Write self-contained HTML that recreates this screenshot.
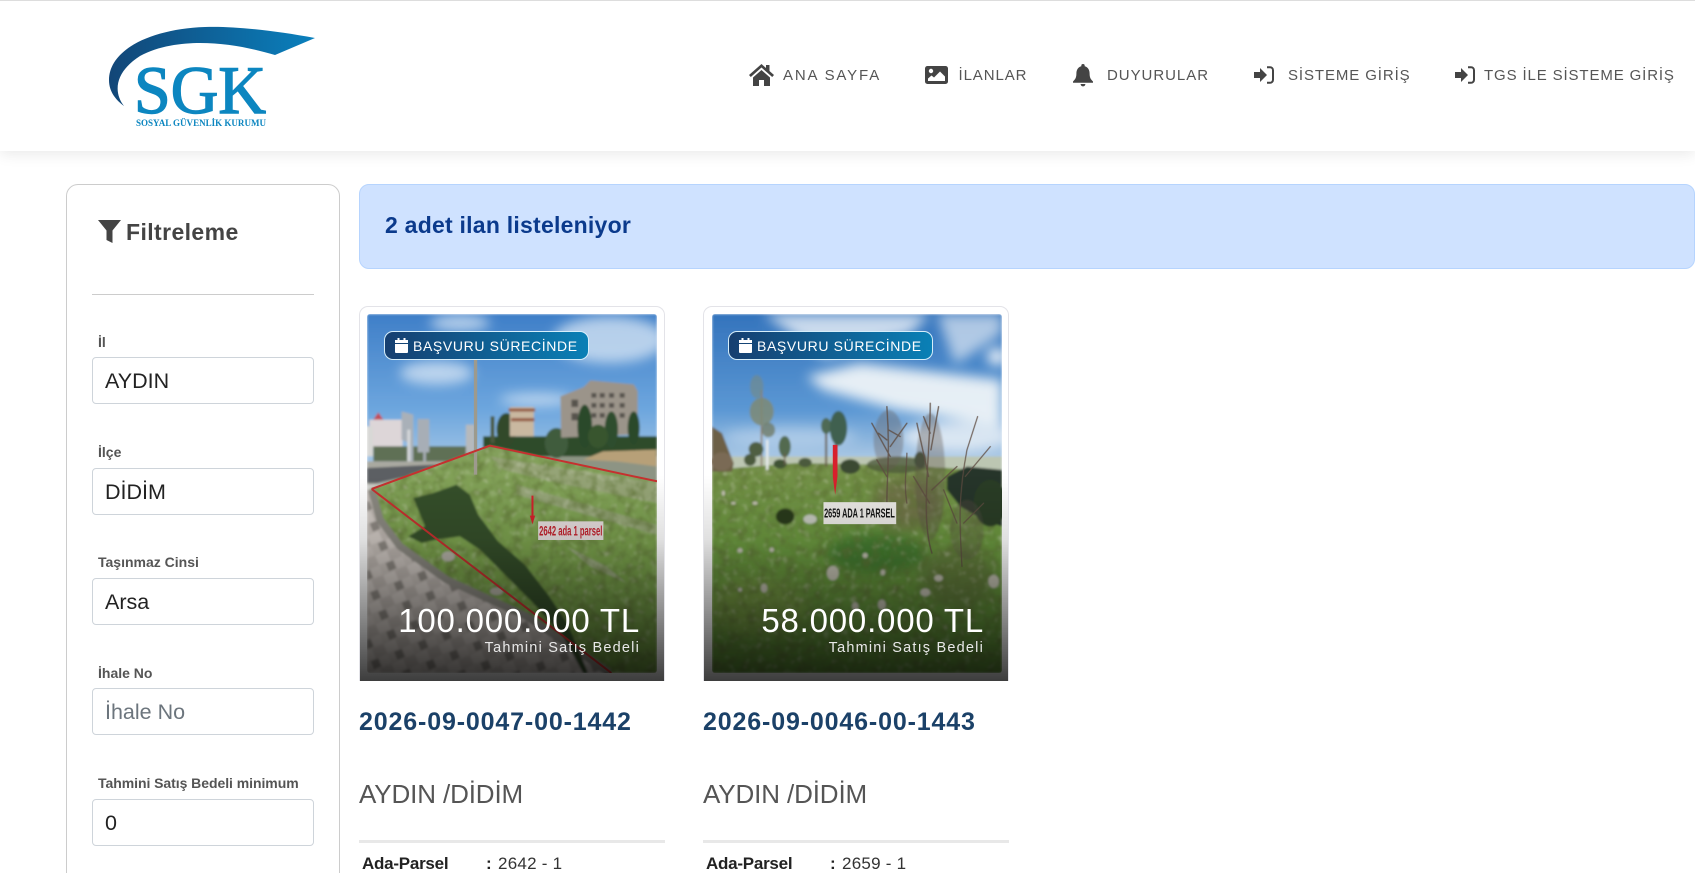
<!DOCTYPE html>
<html lang="tr">
<head>
<meta charset="utf-8">
<title>SGK İlanlar</title>
<style>
*{box-sizing:border-box}
html,body{margin:0;padding:0;width:1695px;height:873px;overflow:hidden;background:#fff;font-family:"Liberation Sans",sans-serif;color:#444}
#root{position:absolute;left:0;top:0;width:1695px;height:873px;overflow:hidden;background:#fff}
.abs{position:absolute;white-space:nowrap;line-height:1}
header{position:absolute;left:0;top:0;width:1695px;height:151px;background:#fff;border-top:1px solid #ddd;box-shadow:0 3px 14px rgba(0,0,0,.09)}
nav span{position:absolute;white-space:nowrap;font-size:15px;line-height:1;top:67px;color:#555}
nav svg{position:absolute;fill:#444}
aside{position:absolute;left:66px;top:184px;width:274px;height:720px;border:1px solid #ccc;border-radius:12px;background:#fff}
.lbl{position:absolute;left:98px;font-size:14px;font-weight:bold;color:#555;line-height:1;white-space:nowrap}
.inp{position:absolute;left:92px;width:222px;height:47px;border:1px solid #ced4da;border-radius:4px;background:#fff;padding:2px 0 0 12px;font:21.5px "Liberation Sans",sans-serif;color:#222;outline:0}
.inp::placeholder{color:#6c757d;opacity:1}
.alert{position:absolute;left:359px;top:184px;width:1336px;height:85px;background:#cfe2ff;border:1px solid #b6d4fe;border-radius:10px}
.card{position:absolute;top:306px;width:306px;height:375px;background:#fff;border:1px solid #e3e3e8;border-bottom:0;border-radius:9px 9px 0 0;overflow:hidden}
.card svg{position:absolute;left:7px;top:7px;width:290px;height:359px;border-radius:3px}
.fade{position:absolute;inset:0;background:linear-gradient(to bottom,rgba(0,0,0,0) 45%,rgba(0,0,0,.12) 62%,rgba(0,0,0,.5) 85%,rgba(0,0,0,.76) 100%)}
.badge{position:absolute;top:331px;width:205px;height:29px;border:1px solid #d6eefa;border-radius:9px;background:linear-gradient(to right,#163f70,#0a80b6)}
.badge b{position:absolute;left:28px;top:7px;font-weight:normal;font-size:14px;letter-spacing:.63px;color:#fff;line-height:1;white-space:nowrap}
.badge svg{position:absolute;left:10px;top:6px}
.price{position:absolute;font-size:33px;letter-spacing:.8px;color:#fff;line-height:1;white-space:nowrap;text-align:right}
.sub{position:absolute;font-size:14.5px;letter-spacing:1.2px;color:#e8e8e8;line-height:1;white-space:nowrap;text-align:right}
.no{position:absolute;top:710px;font-size:25px;font-weight:bold;letter-spacing:.85px;color:#1b4168;line-height:1;white-space:nowrap}
.loc{position:absolute;top:781px;font-size:26px;letter-spacing:-.13px;color:#555;line-height:1;white-space:nowrap}
.rule{position:absolute;top:840px;width:306px;height:3px;background:#e8e8e8}
.k{position:absolute;top:855px;font-size:17px;font-weight:bold;color:#222;line-height:1;white-space:nowrap;letter-spacing:-.25px}
.c{position:absolute;top:855px;font-size:17px;font-weight:bold;color:#222;line-height:1}
.v{position:absolute;top:855px;font-size:17px;color:#333;line-height:1;white-space:nowrap;letter-spacing:.25px}
</style>
</head>
<body>
<div id="root">

<header>
  <svg style="position:absolute;left:100px;top:15px" width="230" height="120" viewBox="100 16 230 120">
    <defs><linearGradient id="sw" x1="0" x2="1" y1="0" y2="0"><stop offset="0" stop-color="#124677"/><stop offset="1" stop-color="#0a80bd"/></linearGradient></defs>
    <path fill="url(#sw)" d="M315 38C272 30 232 26 205 27C150 29 109 50 109 80C109 92 116 100 124 106C113 92 115 72 140 56C158 46 182 43 200 43C228 43 255 49 275 55Z"/>
    <text x="134" y="113" font-family="Liberation Serif,serif" font-size="68" fill="#0c86c0" stroke="#0c86c0" stroke-width="1.400" textLength="132" lengthAdjust="spacingAndGlyphs">SGK</text>
    <text x="136" y="126" font-family="Liberation Serif,serif" font-size="9.500" font-weight="bold" fill="#0c86c0" textLength="130" lengthAdjust="spacingAndGlyphs">SOSYAL GÜVENLİK KURUMU</text>
  </svg>
  <nav>
    <svg style="left:749px;top:63px" width="25" height="22" viewBox="0 0 25 22"><path d="M12.500 0L0 11l1.800 2L12.500 3.500 23.200 13l1.800-2-4.500-4V1H17v3z"/><path d="M4 13.500L12.500 6 21 13.500V22h-6v-6h-5v6H4z"/></svg>
    <span style="left:783px;letter-spacing:1.85px">ANA SAYFA</span>
    <svg style="left:925px;top:65px" width="23" height="18" viewBox="0 0 23 18"><rect width="23" height="18" rx="2.500"/><circle cx="6" cy="5" r="2.200" fill="#fff"/><path fill="#fff" d="M3 15v-2.500l3.500-3 2.500 2 6-6 5 5V15z"/></svg>
    <span style="left:958.500px;letter-spacing:.9px">İLANLAR</span>
    <svg style="left:1073px;top:63px" width="20" height="23" viewBox="0 0 20 23"><path d="M10 0a1.700 1.700 0 0 1 1.700 1.700v.6C15 3.200 16.600 6 16.600 9.500c0 4.600 1.400 6 3.400 8v1.300H0v-1.300c2-2 3.400-3.400 3.400-8 0-3.500 1.600-6.300 4.900-7.200v-.6A1.700 1.700 0 0 1 10 0zM7.600 20h4.800a2.400 2.400 0 0 1-4.800 0z"/></svg>
    <span style="left:1107px;letter-spacing:.96px">DUYURULAR</span>
    <svg style="left:1254px;top:65px" width="20" height="18" viewBox="0 0 20 18"><path d="M0 6h6V2l7 7-7 7v-4H0z"/><path d="M13 1.200h3a3 3 0 0 1 3 3v9.600a3 3 0 0 1-3 3h-3" fill="none" stroke="#444" stroke-width="2"/></svg>
    <span style="left:1288px;letter-spacing:.9px">SİSTEME GİRİŞ</span>
    <svg style="left:1455px;top:65px" width="20" height="18" viewBox="0 0 20 18"><path d="M0 6h6V2l7 7-7 7v-4H0z"/><path d="M13 1.200h3a3 3 0 0 1 3 3v9.600a3 3 0 0 1-3 3h-3" fill="none" stroke="#444" stroke-width="2"/></svg>
    <span style="left:1484px;letter-spacing:.87px">TGS İLE SİSTEME GİRİŞ</span>
  </nav>
</header>

<aside></aside>
<svg class="abs" style="left:98px;top:220px" width="23" height="23" viewBox="0 0 23 23"><path fill="#444" d="M0 0h23L14.500 10.500V23L8.500 20V10.500z"/></svg>
<div class="abs" style="left:126px;top:221px;font-size:23px;font-weight:bold;letter-spacing:.4px;color:#444">Filtreleme</div>
<div class="abs" style="left:92px;top:294px;width:222px;height:1px;background:#ccc"></div>

<label class="lbl" style="top:335px">İl</label>
<input class="inp" style="top:357px" value="AYDIN">
<label class="lbl" style="top:445px">İlçe</label>
<input class="inp" style="top:468px" value="DİDİM">
<label class="lbl" style="top:555px">Taşınmaz Cinsi</label>
<input class="inp" style="top:578px" value="Arsa">
<label class="lbl" style="top:666px">İhale No</label>
<input class="inp" style="top:688px" placeholder="İhale No">
<label class="lbl" style="top:776px;letter-spacing:-.05px">Tahmini Satış Bedeli minimum</label>
<input class="inp" style="top:799px" value="0">

<div class="alert"></div>
<div class="abs" style="left:385px;top:214px;font-size:23px;font-weight:bold;letter-spacing:.24px;color:#0b3a8c">2 adet ilan listeleniyor</div>

<!-- CARD 1 -->
<div class="card" style="left:359px">
  <svg viewBox="51 73 871 1077" preserveAspectRatio="none">
    <defs>
      <filter id="b1"><feGaussianBlur stdDeviation="3"/></filter>
      <filter id="b2"><feGaussianBlur stdDeviation="18"/></filter>
      <filter id="n" x="0" y="0" width="1" height="1"><feTurbulence type="fractalNoise" baseFrequency=".035" numOctaves="3" seed="4"/><feColorMatrix values="0 0 0 0 .12  0 0 0 0 .18  0 0 0 0 .04  0 0 0 1.700 -.700"/></filter>
      <filter id="n2" x="0" y="0" width="1" height="1"><feTurbulence type="fractalNoise" baseFrequency=".05" numOctaves="2" seed="9"/><feColorMatrix values="0 0 0 0 .78  0 0 0 0 .78  0 0 0 0 .68  0 0 0 1.200 -.680"/></filter>
      <clipPath id="gc1"><path d="M60 598L420 468l502 107v575H780l-250-170-240-110-140-100-60-80z"/></clipPath>
      <clipPath id="gc2"><path d="M66 540l250-20 300 5 319 20v605H66z"/></clipPath>
      <linearGradient id="sky1" x1="0" x2="0" y1="0" y2="1"><stop offset="0" stop-color="#3f7fc8"/><stop offset=".55" stop-color="#6da6de"/><stop offset="1" stop-color="#bcd3e8"/></linearGradient>
      <linearGradient id="gr1" x1="0" x2="0" y1="0" y2="1"><stop offset="0" stop-color="#84a05c"/><stop offset=".5" stop-color="#7aa24c"/><stop offset="1" stop-color="#6e9a40"/></linearGradient>
      <pattern id="tile" width="76" height="64" patternUnits="userSpaceOnUse" patternTransform="rotate(-22 0 0)">
        <rect width="76" height="64" fill="#c2bbb5"/>
        <rect x="0" y="0" width="36" height="30" fill="#cfc8c2"/>
        <rect x="38" y="0" width="36" height="30" fill="#bbb4ae"/>
        <rect x="20" y="33" width="24" height="26" fill="#8c8781"/>
        <rect x="47" y="33" width="27" height="28" fill="#cac3bd"/>
      </pattern>
    </defs>
    <g filter="url(#b1)">
      <rect x="51" y="73" width="871" height="520" fill="url(#sky1)"/>
      <g filter="url(#b2)" fill="#dbe8f5" opacity=".75">
        <ellipse cx="330" cy="100" rx="90" ry="25"/>
        <ellipse cx="780" cy="150" rx="170" ry="70"/>
        <ellipse cx="260" cy="250" rx="110" ry="35"/>
        <ellipse cx="560" cy="330" rx="110" ry="18"/>
      </g>
      <!-- left building -->
      <rect x="58" y="390" width="100" height="85" fill="#ddd6d8"/>
      <path d="M70 390l15-22 15 22z" fill="#c24b55"/>
      <rect x="51" y="410" width="18" height="90" fill="#d8d8d6"/>
      <rect x="70" y="470" width="280" height="45" fill="#5e6f55"/>
      <!-- signs -->
      <path d="M155 365l35 10v175h-12l-1-90-22-10z" fill="#a9b0b8"/>
      <rect x="172" y="420" width="9" height="130" fill="#d5d8da"/>
      <path d="M203 388h35v100h-10v45h-8v-45h-17z" fill="#a7aeb6"/>
      <rect x="348" y="405" width="26" height="110" fill="#b6b9bc"/>
      <!-- tree band -->
      <rect x="400" y="440" width="522" height="70" fill="#2f4c2c"/>
      <rect x="400" y="500" width="522" height="100" fill="#8d9484"/>
      <ellipse cx="620" cy="460" rx="35" ry="45" fill="#3f5b3c"/>
      <ellipse cx="470" cy="420" rx="30" ry="50" fill="#31492c"/>
      <rect x="422" y="380" width="12" height="80" fill="#4b5a3e"/>
      <!-- apartment -->
      <path d="M632 320l70-28 20-20 130 12 12 20v130l-230 10z" fill="#9b948a"/>
      <g fill="#57534e">
        <rect x="665" y="330" width="20" height="22"/><rect x="725" y="310" width="15" height="14"/><rect x="750" y="310" width="15" height="14"/><rect x="778" y="310" width="15" height="14"/><rect x="810" y="310" width="15" height="14"/>
        <rect x="725" y="340" width="15" height="14"/><rect x="750" y="340" width="15" height="14"/><rect x="778" y="340" width="15" height="14"/><rect x="810" y="340" width="15" height="14"/>
        <rect x="725" y="370" width="15" height="14"/><rect x="750" y="370" width="15" height="14"/><rect x="778" y="370" width="15" height="14"/><rect x="810" y="370" width="15" height="14"/>
        <rect x="665" y="370" width="20" height="22"/>
      </g>
      <ellipse cx="705" cy="410" rx="22" ry="65" fill="#2c4a2c"/>
      <ellipse cx="785" cy="420" rx="20" ry="55" fill="#2f4d2e"/>
      <ellipse cx="852" cy="415" rx="18" ry="50" fill="#2c482a"/>
      <ellipse cx="745" cy="440" rx="30" ry="35" fill="#37552f"/>
      <!-- house -->
      <rect x="480" y="352" width="72" height="88" fill="#c9b8a0"/>
      <path d="M476 356h80v10h-80zM484 385h70v10h-70z" fill="#97604a"/>
      <!-- bank -->
      <path d="M700 510l60-25 160-5v50l-120-15z" fill="#b7a078"/>
      <!-- road -->
      <path d="M51 515h350v20L51 590z" fill="#a9a9a0"/>
      <path d="M51 535l300-15-270 60H51z" fill="#5c5e64"/>
      <rect x="51" y="585" width="40" height="50" fill="#cfcfcc"/>
      <!-- grass -->
      <path d="M60 598L420 468l502 107v575H51z" fill="url(#gr1)"/>
      <path d="M420 500l120 20 382 60v60l-300-60-160-40z" fill="#9ea585" opacity=".7"/>
      <path d="M500 585l420 120v30l-420-120z" fill="#a7aa95" opacity=".55"/>
      <path d="M650 770l120 60 60 50-110-50z" fill="#a8ad96" opacity=".7"/>
      <g clip-path="url(#gc1)"><rect x="51" y="468" width="871" height="682" filter="url(#n)"/><rect x="51" y="468" width="871" height="682" filter="url(#n2)"/></g>
      <!-- pavement -->
      <path d="M51 600h14l25 90 60 80 140 100 240 110 250 170H51z" fill="url(#tile)"/>
      <path d="M65 600l25 90 60 80 140 100 240 110 250 170" fill="none" stroke="#8a8880" stroke-width="22"/>
      <!-- shadow -->
      <path d="M190 625l60-15 70-25 40 30 25 60 60 80 80 70 70 90 60 90 60 145H700l-60-110-90-100-90-90-70-70-60-40-70 10-45 10-40-20 50-30z" fill="#35502a"/>
      <ellipse cx="295" cy="800" rx="20" ry="15" fill="#b5b2a8"/>
      <ellipse cx="440" cy="905" rx="20" ry="12" fill="#b3b0a4"/>
    </g>
    <rect x="372" y="210" width="10" height="345" fill="#9d9a8d"/>
    <path d="M65 598L420 468 922 575M65 598L785 1150" fill="none" stroke="#c6302f" stroke-width="6"/>
    <path d="M545 618h6v60h5l-8 26-8-26h5z" fill="#d3222b"/>
    <rect x="565" y="695" width="196" height="56" fill="#e5dcdc"/>
    <text x="568" y="738" font-family="Liberation Sans,sans-serif" font-size="42" font-weight="bold" fill="#c2202c" textLength="190" lengthAdjust="spacingAndGlyphs">2642 ada 1 parsel</text>
  </svg>
  <div class="fade"></div>
</div>
<div class="badge" style="left:384px">
  <svg width="13" height="15" viewBox="0 0 13 15"><path fill="#fff" d="M2.500 0h2v2h4V0h2v2H13v3H0V2h2.500zM0 6h13v8a1 1 0 0 1-1 1H1a1 1 0 0 1-1-1z"/></svg>
  <b>BAŞVURU SÜRECİNDE</b>
</div>
<div class="price" style="right:1055px;top:604px">100.000.000 TL</div>
<div class="sub" style="right:1055px;top:641px">Tahmini Satış Bedeli</div>
<div class="no" style="left:359px">2026-09-0047-00-1442</div>
<div class="loc" style="left:359px">AYDIN /DİDİM</div>
<div class="rule" style="left:359px"></div>
<div class="k" style="left:362px">Ada-Parsel</div><div class="c" style="left:486px">:</div><div class="v" style="left:498px">2642 - 1</div>

<!-- CARD 2 -->
<div class="card" style="left:703px">
  <svg style="left:8px" viewBox="66 72 869 1078" preserveAspectRatio="none">
    <defs>
      <linearGradient id="sky2" x1="0" x2="0" y1="0" y2="1"><stop offset="0" stop-color="#3474bd"/><stop offset=".6" stop-color="#5c98d4"/><stop offset="1" stop-color="#c4d8ea"/></linearGradient>
      <linearGradient id="gr2" x1="0" x2="0" y1="0" y2="1"><stop offset="0" stop-color="#748f48"/><stop offset=".4" stop-color="#6c9a40"/><stop offset="1" stop-color="#5f9238"/></linearGradient>
    </defs>
    <g filter="url(#b1)">
      <rect x="66" y="72" width="869" height="480" fill="url(#sky2)"/>
      <g filter="url(#b2)" fill="#eef3f8">
        <path d="M220 72h500l-60 60-260 70-80-60z" opacity=".8"/>
        <path d="M740 72h195v60l-140 90z" opacity=".65"/>
        <path d="M350 260l160-40 425 50v140L620 360 400 300z" opacity=".95"/>
        <ellipse cx="800" cy="440" rx="170" ry="45" opacity=".8"/>
        <ellipse cx="300" cy="440" rx="200" ry="30" opacity=".35"/>
        <ellipse cx="920" cy="200" rx="30" ry="25"/>
      </g>
      <rect x="66" y="500" width="869" height="40" fill="#bcc6b2"/>
      <!-- ground -->
      <path d="M66 540l250-20 300 5 319 20v605H66z" fill="url(#gr2)"/>
      <g filter="url(#b2)">
        <ellipse cx="560" cy="790" rx="150" ry="60" fill="#35702a" opacity=".7"/>
        <ellipse cx="800" cy="860" rx="110" ry="90" fill="#5f6e3e" opacity=".6"/>
        <ellipse cx="200" cy="950" rx="150" ry="90" fill="#7f9a48" opacity=".55"/>
        <ellipse cx="650" cy="640" rx="100" ry="80" fill="#6f6a48" opacity=".7"/>
      </g>
      <g clip-path="url(#gc2)"><rect x="66" y="520" width="869" height="630" filter="url(#n)"/><rect x="66" y="520" width="869" height="630" filter="url(#n2)"/></g>
      <!-- left brush -->
      <path d="M66 410l30 20 35 90-5 25H66z" fill="#6d6047"/>
      <ellipse cx="95" cy="515" rx="32" ry="28" fill="#7a6a55"/>
      <!-- background scrub -->
      <ellipse cx="345" cy="518" rx="20" ry="14" fill="#4c5a3c"/>
      <ellipse cx="270" cy="522" rx="20" ry="14" fill="#3f5236"/>
      <ellipse cx="480" cy="530" rx="30" ry="22" fill="#3a4a30"/>
      <ellipse cx="180" cy="510" rx="18" ry="18" fill="#4b5a3c"/>
      <!-- tree left -->
      <rect x="212" y="300" width="5" height="230" fill="#8f7f6c"/>
      <rect x="228" y="450" width="7" height="90" fill="#e8ecec"/>
      <ellipse cx="215" cy="365" rx="36" ry="42" fill="#7e8a74" opacity=".85"/>
      <ellipse cx="200" cy="290" rx="20" ry="35" fill="#7a8a7c" opacity=".55"/>
      <ellipse cx="235" cy="420" rx="20" ry="22" fill="#707c68" opacity=".8"/>
      <ellipse cx="198" cy="478" rx="22" ry="22" fill="#4f5f43"/>
      <ellipse cx="284" cy="470" rx="18" ry="32" fill="#536a50"/>
      <rect x="282" y="490" width="4" height="35" fill="#6c5c4c"/>
      <!-- centre trees -->
      <rect x="405" y="420" width="6" height="110" fill="#685a45"/>
      <rect x="434" y="440" width="6" height="60" fill="#685a45"/>
      <ellipse cx="408" cy="408" rx="15" ry="24" fill="#4f6a55"/>
      <ellipse cx="445" cy="415" rx="26" ry="52" fill="#3f6150"/>
      <!-- right bushes -->
      <path d="M770 560l60-30 105 10v170l-55-20-70-40-40-50z" fill="#27352a"/>
      <ellipse cx="900" cy="640" rx="50" ry="70" fill="#2a3d28"/>
      <ellipse cx="620" cy="525" rx="90" ry="25" fill="#4f5b3c" opacity=".8"/>
      <ellipse cx="690" cy="510" rx="18" ry="25" fill="#3e4f39"/>
      <ellipse cx="595" cy="450" rx="45" ry="90" fill="#6a5f58" opacity=".35"/>
      <ellipse cx="720" cy="560" rx="45" ry="190" fill="#5c5048" opacity=".35"/>
      <ellipse cx="830" cy="720" rx="50" ry="90" fill="#5c5048" opacity=".3"/>
      <!-- rock clump -->
      <ellipse cx="285" cy="680" rx="28" ry="24" fill="#2b3a1e"/>
      <ellipse cx="360" cy="688" rx="20" ry="14" fill="#c4c8be"/>
      <!-- stones -->
      <g fill="#c4c2b2">
        <ellipse cx="428" cy="850" rx="18" ry="22"/><ellipse cx="705" cy="908" rx="15" ry="12"/><ellipse cx="575" cy="945" rx="12" ry="16"/><ellipse cx="910" cy="875" rx="16" ry="20"/><ellipse cx="222" cy="895" rx="10" ry="14"/><ellipse cx="525" cy="797" rx="8" ry="8"/><ellipse cx="745" cy="865" rx="13" ry="10"/><ellipse cx="495" cy="950" rx="10" ry="13"/><ellipse cx="150" cy="782" rx="8" ry="7"/><ellipse cx="245" cy="780" rx="7" ry="7"/><ellipse cx="578" cy="848" rx="7" ry="9"/><ellipse cx="150" cy="900" rx="6" ry="6"/><ellipse cx="195" cy="640" rx="8" ry="5"/><ellipse cx="100" cy="610" rx="5" ry="8"/><ellipse cx="130" cy="640" rx="7" ry="4"/>
      </g>
    </g>
    <g fill="none" stroke="#5f4d42" stroke-width="4" stroke-linecap="round" opacity=".85">
      <path d="M590 640C590 560 600 480 590 350M600 500L545 400M600 470L650 400M590 560L560 510M595 420L630 440M590 450L565 430"/>
      <path d="M725 790C690 680 720 500 720 340M715 560L680 400M722 480L745 350M725 600L800 530M718 640L670 560M720 430L700 380"/>
      <path d="M815 830C810 720 800 640 830 480L862 380M825 560L900 470M800 700L760 600M820 700L880 640" stroke-width="3.500"/>
      <path d="M650 640C640 580 650 530 650 490" stroke-width="3.500"/>
    </g>
    <path d="M428 465h14v95l-7 55-7-55z" fill="#d81f2c"/>
    <rect x="400" y="637" width="218" height="66" fill="#eceae6"/>
    <text x="402" y="683" font-family="Liberation Sans,sans-serif" font-size="38" font-weight="bold" fill="#151515" textLength="212" lengthAdjust="spacingAndGlyphs">2659 ADA 1 PARSEL</text>
  </svg>
  <div class="fade"></div>
</div>
<div class="badge" style="left:728px">
  <svg width="13" height="15" viewBox="0 0 13 15"><path fill="#fff" d="M2.500 0h2v2h4V0h2v2H13v3H0V2h2.500zM0 6h13v8a1 1 0 0 1-1 1H1a1 1 0 0 1-1-1z"/></svg>
  <b>BAŞVURU SÜRECİNDE</b>
</div>
<div class="price" style="right:711px;top:604px">58.000.000 TL</div>
<div class="sub" style="right:711px;top:641px">Tahmini Satış Bedeli</div>
<div class="no" style="left:703px">2026-09-0046-00-1443</div>
<div class="loc" style="left:703px">AYDIN /DİDİM</div>
<div class="rule" style="left:703px"></div>
<div class="k" style="left:706px">Ada-Parsel</div><div class="c" style="left:830px">:</div><div class="v" style="left:842px">2659 - 1</div>

</div>
</body>
</html>
